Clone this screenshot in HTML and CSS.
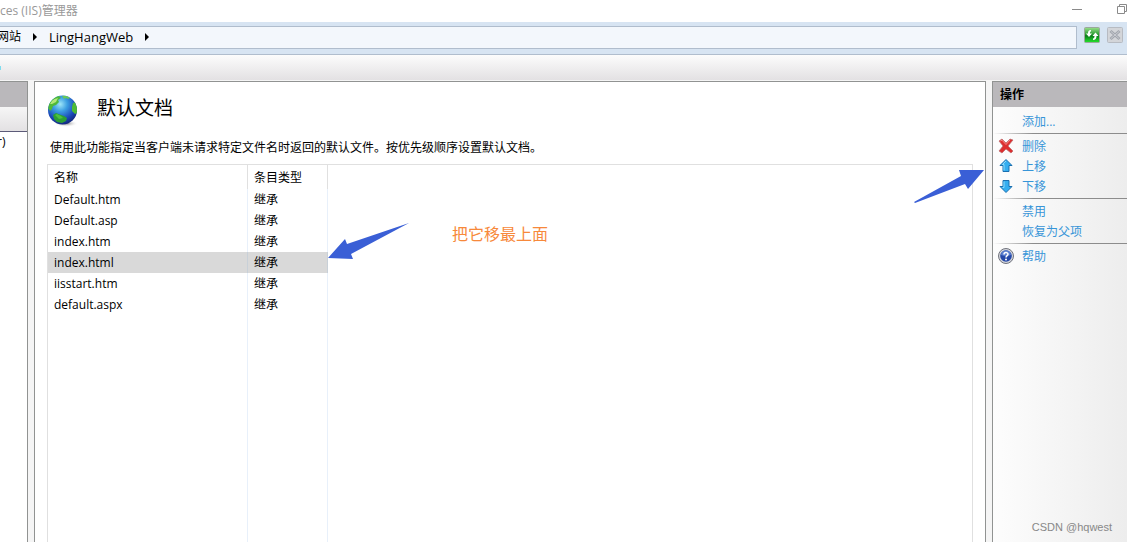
FILE: index.html
```html
<!DOCTYPE html>
<html lang="zh-CN">
	<head>
		<meta charset="utf-8" />
		<meta name="viewport" content="width=device-width, initial-scale=1">
		<title>Internet Information Services (IIS)管理器</title>
		<link rel="stylesheet" href="styles.css">
	</head>
	<body>

		<div class="titlebar">
			<span class="title">ces (IIS)管理器</span>
			<button class="win-btn" aria-label="最小化">
				<svg width="10" height="10" viewBox="0 0 10 10"><path d="M0 5.5h10" stroke="#8a8a8a" /></svg>
			</button>
			<button class="win-btn" aria-label="还原">
				<svg width="10" height="10" viewBox="0 0 10 10" fill="none" stroke="#8a8a8a"><path d="M.5 2.5h7v7h-7zM2.5 2.5v-2h7v7h-2" /></svg>
			</button>
		</div>

		<div class="address">
			<div class="path">
				<a href="#">网站</a>
				<i class="arrow"></i>
				<a href="#">LingHangWeb</a>
				<i class="arrow"></i>
			</div>
			<button class="tool" aria-label="刷新">
				<svg width="16" height="16" viewBox="0 0 16 16">
					<defs>
						<linearGradient id="green" x1="0" y1="0" x2="0" y2="1">
							<stop offset="0" stop-color="#9be08c" />
							<stop offset=".45" stop-color="#2e9e35" />
							<stop offset=".55" stop-color="#0b7a1c" />
							<stop offset="1" stop-color="#25e62c" />
						</linearGradient>
					</defs>
					<rect x=".5" y=".5" width="15" height="15" rx="1" fill="url(#green)" stroke="#9aa89c" />
					<path d="M7 3C4.500 3 4 4.500 4 6.500H2l3 3.500 3-3.500H6C6 5 6 4.500 7 4.500zM9 13c2.500 0 3.500-1.500 3.500-4H14.500l-3-3.500-3 3.500h2c0 1.500-.5 2.500-1.500 2.500z" fill="#fff" />
				</svg>
			</button>
			<button class="tool" aria-label="停止">
				<svg width="16" height="16" viewBox="0 0 16 16">
					<rect x=".5" y=".5" width="15" height="15" rx="1" fill="#d3d5d9" stroke="#b7bbc2" />
					<path d="M3.500 4l9 8M12.500 4l-9 8" stroke="#a2a6ae" stroke-width="3" />
					<path d="M4 4.500l8 7M12 4.500l-8 7" stroke="#c9ccd2" />
				</svg>
			</button>
		</div>

		<div class="toolbar"><i class="dot"></i></div>

		<div class="main">
			<div class="tree">
				<div class="pane-head"></div>
				<div class="tree-tools"></div>
				<div class="tree-node">r)</div>
			</div>

			<div class="feature">
				<div class="feature-head">
					<svg width="32" height="34" viewBox="0 0 32 34">
						<defs>
							<radialGradient id="sea" cx=".42" cy=".3" r=".7">
								<stop offset="0" stop-color="#9fe6f8" />
								<stop offset=".35" stop-color="#3c9fe2" />
								<stop offset=".75" stop-color="#1b49b8" />
								<stop offset="1" stop-color="#142a80" />
							</radialGradient>
							<radialGradient id="shade">
								<stop offset="0" stop-color="#777" />
								<stop offset="1" stop-color="#fff" stop-opacity="0" />
							</radialGradient>
							<clipPath id="ball"><circle cx="15.500" cy="17" r="14.500" /></clipPath>
						</defs>
						<ellipse cx="19" cy="30.500" rx="12" ry="3.500" fill="url(#shade)" />
						<circle cx="15.500" cy="17" r="14.500" fill="url(#sea)" />
						<g clip-path="url(#ball)">
							<path d="M1 15C2 9 6 4 12 3l2 2-3 2 1 2-3 3-3 1-1 3-2 2z" fill="#4fb93a" />
							<path d="M3 11c2-4 4-5 8-6l-2 4-4 2z" fill="#b3e77a" />
							<path d="M15 3c3-1 6 0 8 2l-2 1-2-1-2 1z" fill="#69c75a" />
							<path d="M26 10l3-1 2 6-1 5-2 1-3-3 0-4z" fill="#4dbb35" />
							<path d="M6 22l3-2 5 2 3 1 3 2-1 3-4 2-5-1-3-3z" fill="#2c9f34" />
							<path d="M8 22l2-1 4 2 2 2-4 1z" fill="#4cc23f" />
						</g>
					</svg>
					<h1>默认文档</h1>
				</div>
				<p class="intro">使用此功能指定当客户端未请求特定文件名时返回的默认文件。按优先级顺序设置默认文档。</p>

				<div class="list">
					<table>
						<thead>
							<tr><th>名称</th><th>条目类型</th></tr>
						</thead>
						<tbody>
							<tr><td>Default.htm</td><td>继承</td></tr>
							<tr><td>Default.asp</td><td>继承</td></tr>
							<tr><td>index.htm</td><td>继承</td></tr>
							<tr class="selected"><td>index.html</td><td>继承</td></tr>
							<tr><td>iisstart.htm</td><td>继承</td></tr>
							<tr><td>default.aspx</td><td>继承</td></tr>
							<tr class="filler"><td></td><td></td></tr>
						</tbody>
					</table>
				</div>

				<!-- 标注 -->
				<svg class="mark mark-row" width="82" height="38" viewBox="0 0 82 38"><path d="M0 35L17 16l2 5L81 0 23 31l2 5z" fill="#3a5fd6" /></svg>
				<span class="mark note">把它移最上面</span>
				<svg class="mark mark-move" width="72" height="34" viewBox="0 0 72 34"><path d="M1 32L48 6l-2-6h25L55 19l-3-5L2 33z" fill="#3a5fd6" /></svg>
			</div>

			<div class="actions">
				<div class="pane-head">操作</div>
				<ul>
					<li><a href="#">添加...</a></li>
					<li class="line"></li>
					<li>
						<svg width="16" height="16" viewBox="0 0 16 16">
							<path d="M1 3l3-2 4 4 4-4 3 1-5 6 5 5-2 2-5-4-4 4-3-2 4-5z" fill="#dd2f2f" stroke="#b9696b" stroke-width=".7" />
							<path d="M2.500 3L4 2.200l4 4.300L12 2" stroke="#f58b86" fill="none" />
						</svg>
						<a href="#">删除</a>
					</li>
					<li>
						<svg width="16" height="16" viewBox="0 0 16 16"><path d="M8 1.500l6 6h-3v6H5v-6H2z" fill="#35aef0" stroke="#1a6fb0" stroke-linejoin="round" /><path d="M8 3L4.500 6.500H6v6" fill="none" stroke="#8edafb" /></svg>
						<a href="#">上移</a>
					</li>
					<li>
						<svg width="16" height="16" viewBox="0 0 16 16"><path d="M8 14.500l6-6h-3v-6H5v6H2z" fill="#35aef0" stroke="#1a6fb0" stroke-linejoin="round" /><path d="M6 3.500v6H4.500" fill="none" stroke="#8edafb" /></svg>
						<a href="#">下移</a>
					</li>
					<li class="line"></li>
					<li><a href="#">禁用</a></li>
					<li><a href="#">恢复为父项</a></li>
					<li class="line"></li>
					<li>
						<svg width="16" height="16" viewBox="0 0 16 16">
							<circle cx="8" cy="8" r="7.500" fill="#d5d7dd" stroke="#70737d" />
							<circle cx="8" cy="8" r="5.800" fill="#2448a8" />
							<path d="M3 7a5 4.500 0 0 1 10 0q-5 2-10 0" fill="#5a7fd0" />
							<path d="M6 6.500C6 4 10 4 10 6.300 10 7.700 8 7.700 8 9.500" fill="none" stroke="#fff" stroke-width="1.500" />
							<circle cx="8" cy="11.500" r="1" fill="#fff" />
						</svg>
						<a href="#">帮助</a>
					</li>
				</ul>
				<span class="watermark">CSDN @hqwest</span>
			</div>
		</div>

	</body>
</html>
```

FILE: styles.css
```css
* {
	box-sizing: border-box;
}

body {
	display: flex;
	flex-direction: column;
	height: 100vh;
	margin: 0;
	overflow: hidden;
	background-color: #f5f5f5;
	color: #000;
	font: 12px/20px "Open Sans", "Noto Sans CJK SC", sans-serif;
}

a {
	color: inherit;
	text-decoration: none;
}

button {
	display: flex;
	padding: 0;
	border: 0;
	background: none;
}

svg {
	display: block;
	flex: none;
}

ul {
	list-style: none;
	margin: 0;
	padding: 4px 0;
}

/* 标题栏 */
.titlebar {
	display: flex;
	flex: none;
	align-items: flex-start;
	gap: 35px;
	height: 22px;
	background-color: #fff;
	color: #999;
}

.title {
	flex: 1;
	line-height: 22px;
}

.win-btn {
	padding-top: 4px;
}

/* 地址栏 */
.address {
	display: flex;
	flex: none;
	align-items: flex-start;
	gap: 7px;
	height: 33px;
	padding: 4px 4px 0 0;
	border-bottom: 1px solid #b0bdcd;
	background-color: #d7e4f2;
}

.path {
	display: flex;
	flex: 1;
	align-items: center;
	gap: 12px;
	height: 23px;
	padding-bottom: 2px;
	border: 1px solid #b0bdcd;
	border-left: 0;
	background-color: #f3f7fc;
	font-size: 13px;
}

.path a:first-child {
	margin-left: -3px;
	font-size: 12px;
}

.arrow {
	border: 4px solid transparent;
	border-left-color: #000;
	border-right: 0;
}

.tool {
	padding-top: 1px;
}

.toolbar {
	display: flex;
	flex: none;
	align-items: center;
	height: 25px;
	background-image: linear-gradient(#fcfcfc, #e3e1e3);
}

.dot {
	width: 1px;
	height: 4px;
	background-color: #7fdcee;
}

/* 三栏 */
.main {
	display: flex;
	flex: 1;
	gap: 6px;
	min-height: 0;
	padding-top: 1px;
}

.tree,
.feature,
.actions {
	border: 1px solid #919392;
	border-bottom: 0;
}

.pane-head {
	height: 25px;
	padding-left: 7px;
	background-color: #bab8bb;
	font-weight: bold;
	line-height: 26px;
}

.tree {
	flex: none;
	width: 28px;
	border-left: 0;
	background-color: #fff;
}

.tree-tools {
	height: 25px;
	border-bottom: 1px solid #5c5a78;
	background-image: linear-gradient(#f6f6f6, #e3e1e3);
}

.tree-node {
	margin-left: -3px;
}

.feature {
	position: relative;
	display: flex;
	flex: 1;
	flex-direction: column;
	padding: 11px 12px 0;
	background-color: #fff;
}

.feature-head {
	display: flex;
	gap: 18px;
	height: 44px;
}

h1 {
	margin: 0;
	font-size: 19px;
	font-weight: normal;
	line-height: 30px;
}

.intro {
	margin: 0 0 6px;
	padding: 1px 0 0 3px;
}

.list {
	display: flex;
	flex: 1;
	border: 1px solid #e0e0e0;
	border-bottom: 0;
}

table {
	width: 280px;
	border-spacing: 0;
	table-layout: fixed;
}

th,
td {
	height: 21px;
	padding: 0 6px;
	border-right: 1px solid #e8f0fa;
	line-height: 21px;
	text-align: left;
}

th {
	height: 24px;
	border-color: #e0e0e0;
	font-weight: normal;
}

th:first-child {
	width: 200px;
}

.selected td {
	border-color: #c8d0d8;
	background-color: #d9d9d9;
}

.filler td {
	height: auto;
}

/* 操作栏 */
.actions {
	display: flex;
	flex: none;
	flex-direction: column;
	width: 135px;
	border-right: 0;
	background-image: linear-gradient(to right, #fdfdfd, #ededed);
	color: #3795d8;
}

.actions .pane-head {
	color: #000;
}

.actions li {
	display: flex;
	align-items: center;
	height: 20px;
	padding-left: 5px;
	line-height: 22px;
}

.actions li svg {
	margin-right: 8px;
}

.actions li a:only-child {
	margin-left: 24px;
}

.actions a {
	padding-top: 2px;
}

.actions .line {
	height: 1px;
	margin: 2px 0;
	background-image: linear-gradient(to right, transparent, #8c8c8c 30%);
}

.watermark {
	margin: auto 15px 5px auto;
	color: #888;
	font-family: "Liberation Sans", sans-serif;
	font-size: 11px;
}

/* 标注 */
.mark {
	position: absolute;
}

.mark-row {
	top: 141px;
	left: 293px;
}

.note {
	top: 142px;
	left: 417px;
	color: #f7893b;
	font-size: 16px;
}

.mark-move {
	top: 88px;
	right: 0;
}
```
